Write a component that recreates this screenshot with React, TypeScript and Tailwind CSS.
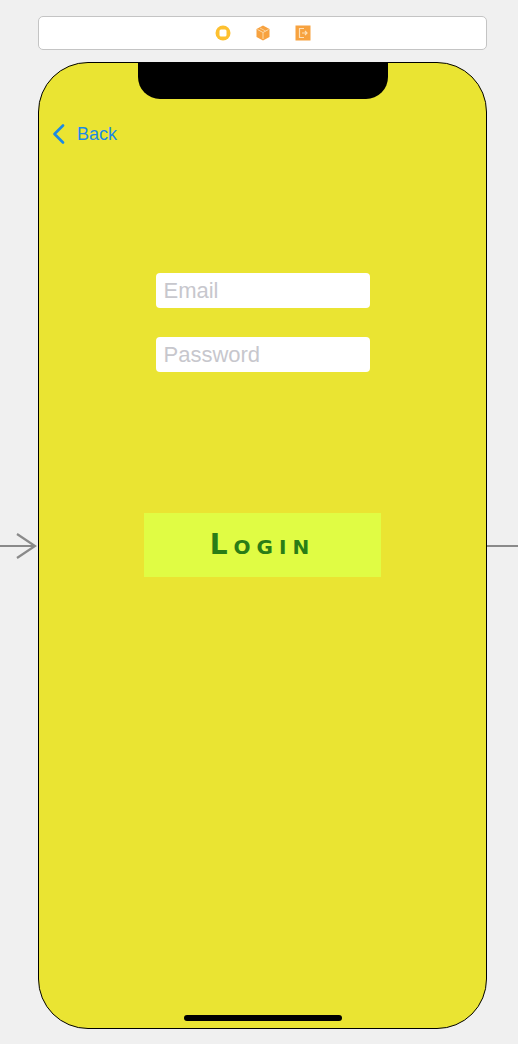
/**
 * Storyboard-style login scene: device frame with a notch,
 * back link, two text fields and a big login button.
 */
function SceneIcons() {
  return (
    <div className="flex items-center justify-center gap-[22px]">
      {/* view controller */}
      <svg width="18" height="18" viewBox="0 0 18 18">
        <circle cx="9" cy="9" r="7.5" fill="#fdc02f" />
        <rect x="5.5" y="5.5" width="7" height="7" rx="1.5" fill="#fff" />
      </svg>
      {/* first responder cube */}
      <svg width="18" height="18" viewBox="0 0 18 18">
        <path d="M9 1.5 L15.5 5 V13 L9 16.5 L2.5 13 V5 Z" fill="#f7a23f" />
        <path d="M9 8.5 V15 M3.5 5.5 L9 8.5 L14.5 5.5" stroke="#fcd9a8" strokeWidth="1" fill="none" />
        <path d="M6 4 L11.5 7" stroke="#fcd9a8" strokeWidth="0.8" fill="none" />
      </svg>
      {/* exit */}
      <svg width="18" height="18" viewBox="0 0 18 18">
        <rect x="1.5" y="1.5" width="15" height="15" fill="#f7a23f" />
        <path d="M10 4.5 H5.5 V13.5 H10" stroke="#fde0b8" strokeWidth="1.2" fill="none" />
        <path d="M8 9 H13 M11 7 L13 9 L11 11" stroke="#fde0b8" strokeWidth="1.2" fill="none" />
      </svg>
    </div>
  );
}

export default function App() {
  return (
    <div
      className="w-[518px] h-[1044px] bg-[#f0f0f0] overflow-hidden"
      style={{ fontFamily: '"Liberation Sans", Arial, sans-serif' }}
    >
      {/* scene dock */}
      <div className="ml-[38px] mt-[16px] w-[449px] h-[34px] bg-white border border-[#c4c4c4] rounded-[5px] flex items-center justify-center">
        <SceneIcons />
      </div>

      <div className="mt-[12px] flex items-center">
        {/* entry point arrow */}
        <div className="w-[38px] flex items-center">
          <svg width="38" height="36" viewBox="0 0 38 36">
            <path d="M0 18 H35 M17 6 L35 18 L17 30" stroke="#8a8a8a" strokeWidth="2.2" fill="none" />
          </svg>
        </div>

        {/* device */}
        <div className="w-[449px] h-[967px] bg-[#eae432] border border-black rounded-[50px] flex flex-col overflow-hidden">
          <div className="mx-auto w-[250px] h-[36px] bg-black rounded-b-[22px] shrink-0" />

          <div className="mt-[25px] ml-[13px] flex items-center text-[#1b8ae4]">
            <svg width="13" height="20" viewBox="0 0 13 20">
              <path d="M11 1.5 L2.5 10 L11 18.5" stroke="currentColor" strokeWidth="2.6" fill="none" strokeLinecap="round" strokeLinejoin="round" />
            </svg>
            <span className="ml-[12px] text-[18px] leading-none">Back</span>
          </div>

          <div className="mt-[129px] flex flex-col items-center gap-[29px]">
            <div className="w-[214px] h-[35px] bg-white rounded-[4px] flex items-center px-[8px] text-[22px] text-[#c7c7cd]">
              Email
            </div>
            <div className="w-[214px] h-[35px] bg-white rounded-[4px] flex items-center px-[8px] text-[22px] text-[#c7c7cd]">
              Password
            </div>
          </div>

          <div className="mt-[141px] flex justify-center">
            <div className="w-[237px] h-[64px] bg-[#e0fc44] flex items-center justify-center">
              <span
                className="text-[28px] font-bold text-[#2a7d16] tracking-[6px] [font-variant:small-caps]"
                style={{ fontFamily: '"DejaVu Sans", sans-serif' }}
              >
                Login
              </span>
            </div>
          </div>

          <div className="mt-auto mb-[7px] mx-auto w-[158px] h-[6px] bg-black rounded-full" />
        </div>

        {/* segue line */}
        <div className="flex-1 h-[2px] bg-[#8a8a8a]" />
      </div>
    </div>
  );
}
